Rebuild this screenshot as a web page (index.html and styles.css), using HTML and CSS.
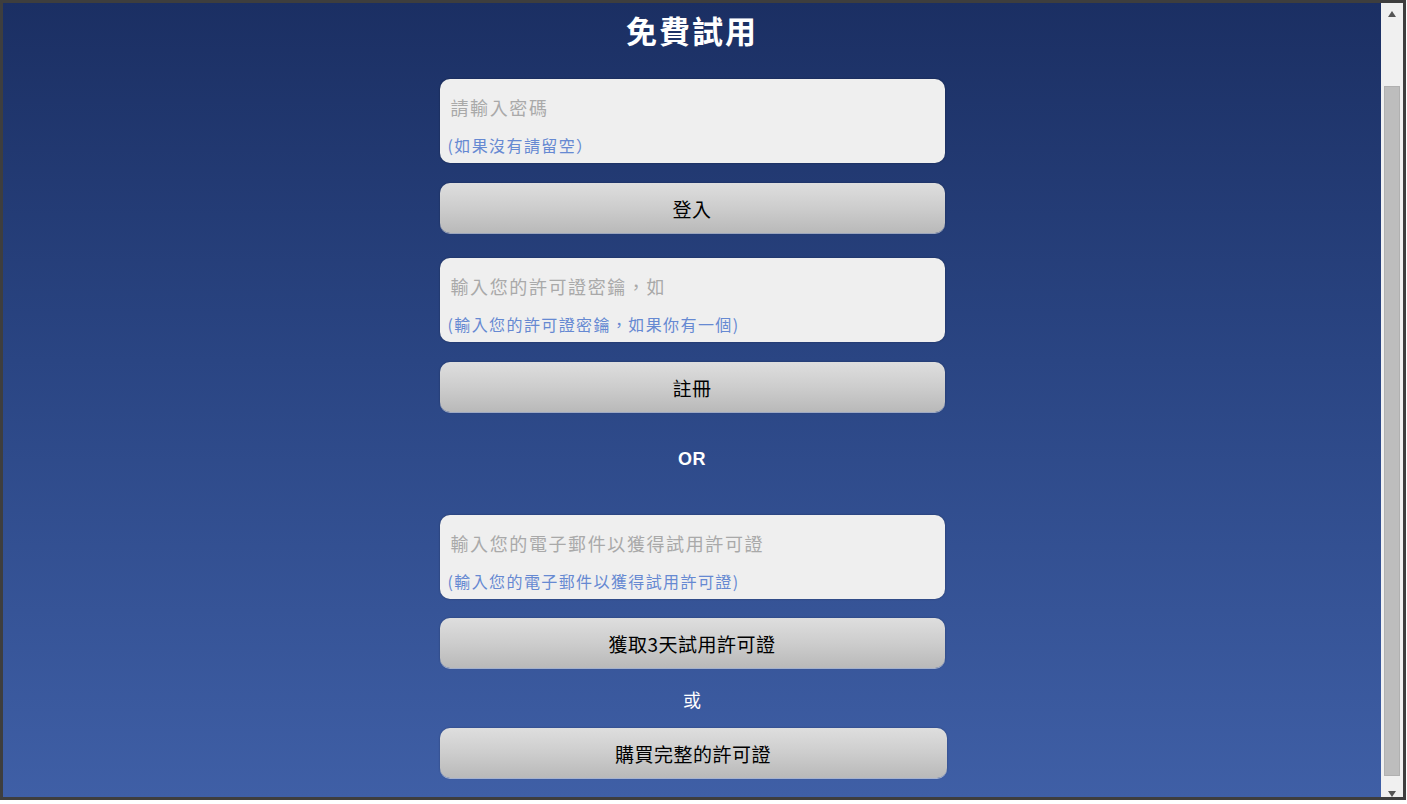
FILE: index.html
```html
<!DOCTYPE html>
<html lang="zh-Hant">
<head>
<meta charset="utf-8">
<title>免費試用</title>
<link rel="stylesheet" href="styles.css">
</head>
<body>
<div class="window">
  <main class="main">
    <h1 class="title">免費試用</h1>
    <div class="form">
      <div class="field field-first">
        <div class="placeholder">請輸入密碼</div>
        <div class="hint">(如果沒有請留空）</div>
      </div>
      <div class="btn btn-a">登入</div>
      <div class="field field-second">
        <div class="placeholder">輸入您的許可證密鑰，如</div>
        <div class="hint">(輸入您的許可證密鑰，如果你有一個)</div>
      </div>
      <div class="btn btn-a">註冊</div>
      <div class="sep sep-or">OR</div>
      <div class="field field-third">
        <div class="placeholder">輸入您的電子郵件以獲得試用許可證</div>
        <div class="hint">(輸入您的電子郵件以獲得試用許可證)</div>
      </div>
      <div class="btn btn-b">獲取3天試用許可證</div>
      <div class="sep sep-huo">或</div>
      <div class="btn btn-c">購買完整的許可證</div>
    </div>
  </main>
  <div class="scrollbar">
    <div class="arrow arrow-up"></div>
    <div class="thumb-track"><div class="thumb"></div></div>
    <div class="arrow arrow-down"></div>
  </div>
</div>
</body>
</html>
```

FILE: styles.css
```css
html, body {
  margin: 0;
  padding: 0;
  background: #ffffff;
}

.window {
  width: 1406px;
  height: 800px;
  box-sizing: border-box;
  border: 3px solid #3e3e3e;
  display: flex;
  overflow: hidden;
}

.main {
  flex: 1;
  background: linear-gradient(to bottom, #1b2f63 0%, #2a4583 45%, #3f5fa6 100%);
  display: flex;
  flex-direction: column;
  align-items: center;
  font-family: "Noto Sans CJK TC", "Liberation Sans", sans-serif;
}

.title {
  margin: 10px 0 0 0;
  font-family: "Liberation Serif", "Noto Sans CJK TC", serif;
  font-size: 31px;
  line-height: 40px;
  font-weight: 700;
  color: #ffffff;
  letter-spacing: 2px;
}

.form {
  width: 505px;
  display: flex;
  flex-direction: column;
  align-items: stretch;
}

.field {
  height: 84px;
  box-sizing: border-box;
  background: #efefef;
  border-radius: 10px;
  padding: 16px 0 0 0;
  box-shadow: 0 0 2px rgba(0, 0, 0, 0.35);
}

.field-first { margin-top: 26px; }
.field-second { margin-top: 25px; }
.field-third { margin-top: 44px; }

.placeholder {
  padding-left: 11px;
  font-size: 18px;
  line-height: 24px;
  letter-spacing: 1.6px;
  color: #a9a9a9;
  white-space: nowrap;
}

.hint {
  margin-top: 15px;
  padding-left: 8px;
  font-size: 16px;
  line-height: 22px;
  letter-spacing: 1.4px;
  color: #6689d2;
  white-space: nowrap;
}

.btn {
  height: 50px;
  box-sizing: border-box;
  margin-top: 20px;
  border-radius: 10px;
  background: linear-gradient(to bottom, #dedede 0%, #cdcdcd 50%, #b9b9b9 100%);
  box-shadow: 0 1px 0 rgba(255, 255, 255, 0.55), 0 0 2px rgba(0, 0, 0, 0.3);
  display: flex;
  align-items: center;
  justify-content: center;
  font-size: 19px;
  color: #000000;
  letter-spacing: 0.5px;
}

.btn-b { margin-top: 19px; }
.btn-c { margin-top: 17px; width: 507px; }

.sep {
  text-align: center;
  color: #ffffff;
  font-size: 18px;
  line-height: 24px;
}

.sep-or {
  margin-top: 35px;
  font-family: "Liberation Sans", "Noto Sans CJK TC", sans-serif;
  font-weight: 700;
  letter-spacing: 0.5px;
}

.sep-huo {
  margin-top: 19px;
}

.scrollbar {
  width: 22px;
  background: #f0f0f0;
  display: flex;
  flex-direction: column;
  align-items: center;
}

.arrow {
  width: 0;
  height: 0;
  border-left: 4px solid transparent;
  border-right: 4px solid transparent;
}

.arrow-up {
  margin-top: 8px;
  border-bottom: 6px solid #555555;
}

.arrow-down {
  margin-top: 7px;
  border-top: 6px solid #555555;
}

.thumb-track {
  flex: 1;
  width: 100%;
  display: flex;
  justify-content: center;
  padding-top: 69px;
  box-sizing: border-box;
}

.thumb {
  width: 16px;
  height: 690px;
  background: #bdbdbd;
  border: 1px solid #b0b0b0;
  box-sizing: border-box;
}
```
